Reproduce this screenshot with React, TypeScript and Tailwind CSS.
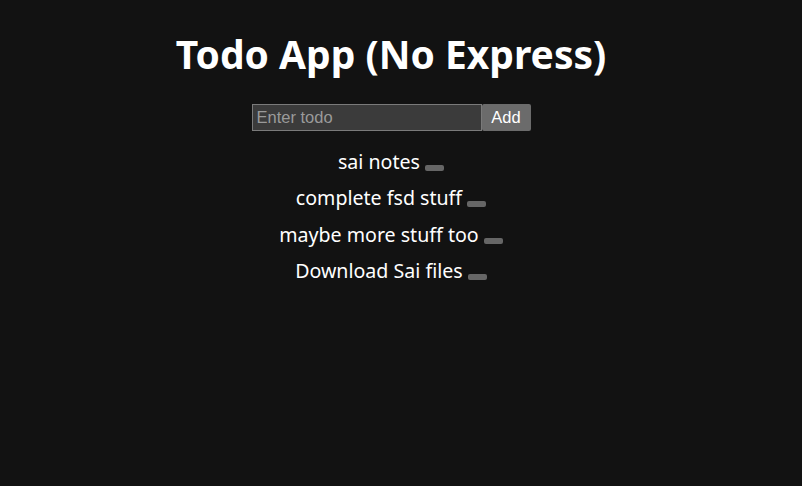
import React from "react";

const todos = ["sai notes", "complete fsd stuff", "maybe more stuff too", "Download Sai files"];

export default function App() {
  return (
    <div className="min-h-[486px] w-full bg-[#121212] text-white pr-[20px]" style={{ fontFamily: '"Noto Sans", sans-serif' }}>
      <div className="flex flex-col items-center pt-[26px]">
        <h1 className="text-[39px] font-bold leading-[56px]">Todo App (No Express)</h1>
        <div className="mt-[22px] flex items-stretch" style={{ fontFamily: '"Liberation Sans", Arial, sans-serif' }}>
          <input
            placeholder="Enter todo"
            className="w-[230px] h-[27px] bg-[#3b3b3b] border border-[#7a7a7a] px-[4px] text-[16.5px] text-white placeholder:text-[#9a9a9a] outline-none"
          />
          <button className="h-[27px] w-[49px] bg-[#6b6b6b] rounded-[2px] text-[16.5px] text-white">Add</button>
        </div>
        <ul className="mt-[13px] flex flex-col items-center">
          {todos.map((t) => (
            <li key={t} className="text-[19.6px] leading-[36.3px]">
              {t}{" "}
              <button className="inline-block w-[19px] h-[6px] rounded-[2px] bg-[#666] align-[-2px]"></button>
            </li>
          ))}
        </ul>
      </div>
    </div>
  );
}
